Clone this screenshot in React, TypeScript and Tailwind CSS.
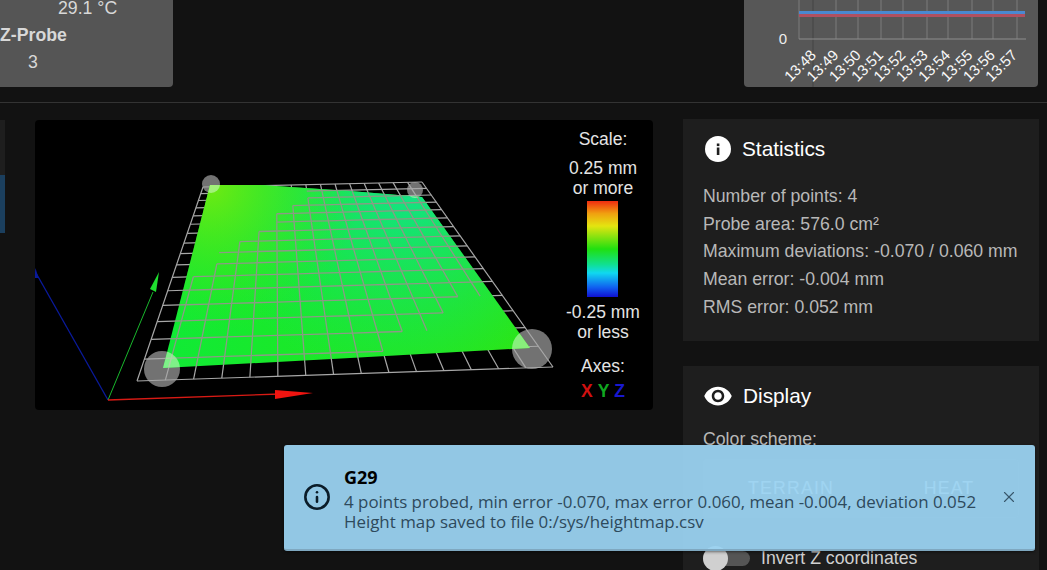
import React from "react";
import { Info, X } from "lucide-react";

type P = [number, number];

// Projects the unit square (u right, v up) onto the bed seen in the picture.
function homography(a: P, b: P, c: P, d: P) {
  const dx1 = b[0] - c[0], dx2 = d[0] - c[0], sx = a[0] - b[0] + c[0] - d[0];
  const dy1 = b[1] - c[1], dy2 = d[1] - c[1], sy = a[1] - b[1] + c[1] - d[1];
  const det = dx1 * dy2 - dx2 * dy1;
  const g = (sx * dy2 - dx2 * sy) / det;
  const h = (dx1 * sy - sx * dy1) / det;
  return (u: number, v: number): P => {
    const w = g * u + h * v + 1;
    return [
      ((b[0] - a[0] + g * b[0]) * u + (d[0] - a[0] + h * d[0]) * v + a[0]) / w,
      ((b[1] - a[1] + g * b[1]) * u + (d[1] - a[1] + h * d[1]) * v + a[1]) / w,
    ];
  };
}

// Canvas coordinates: page minus (35,120)
const off = (x: number, y: number): P => [x - 35, y - 120];
const gridAt = homography(off(137, 381), off(553, 367), off(422, 182), off(203, 187));

const COLS = 15;
const ROWS = 16;

const visibleOnSurface = (col: number, row: number) => row - 1.4 * col < 4.6 && row > 0.66 * (col - 7.3);

function BedMesh() {
  const under: React.ReactNode[] = [];
  const over: React.ReactNode[] = [];
  const vLines: string[] = [];
  const hLines: string[] = [];
  for (let i = 0; i <= COLS; i++) {
    let d = "";
    let open = false;
    for (let j = 0; j < ROWS; j++) {
      const a = gridAt(i / COLS, j / ROWS), b = gridAt(i / COLS, (j + 1) / ROWS);
      if (visibleOnSurface(i, j + 0.5)) {
        d += open ? `L${b[0]} ${b[1]}` : `M${a[0]} ${a[1]}L${b[0]} ${b[1]}`;
        open = true;
      } else open = false;
    }
    if (d) vLines.push(d);
    const s = gridAt(i / COLS, 0), e = gridAt(i / COLS, 1);
    under.push(<line key={`v${i}`} x1={s[0]} y1={s[1]} x2={e[0]} y2={e[1]} />);
  }
  for (let j = 0; j <= ROWS; j++) {
    let d = "";
    let open = false;
    for (let i = 0; i < COLS; i++) {
      const a = gridAt(i / COLS, j / ROWS), b = gridAt((i + 1) / COLS, j / ROWS);
      if (visibleOnSurface(i + 0.5, j)) {
        d += open ? `L${b[0]} ${b[1]}` : `M${a[0]} ${a[1]}L${b[0]} ${b[1]}`;
        open = true;
      } else open = false;
    }
    if (d) hLines.push(d);
    const s = gridAt(0, j / ROWS), e = gridAt(1, j / ROWS);
    under.push(<line key={`h${j}`} x1={s[0]} y1={s[1]} x2={e[0]} y2={e[1]} />);
  }
  [...vLines, ...hLines].forEach((d, i) => over.push(<path key={i} d={d} fill="none" />));
  const spheres: [P, number][] = [
    [off(211, 184), 9],
    [off(415, 190), 8],
    [off(162, 369), 18],
    [off(532, 349), 20],
  ];
  const outlinePts: P[] = [off(163, 368), off(350, 358), off(530, 348), off(422, 197), off(350, 191), off(260, 185), off(210, 185)];
  const outline = outlinePts.map((p) => p.join(",")).join(" ");
  return (
    <svg width={618} height={289} viewBox="0 0 618 289" className="block">
      <defs>
        <clipPath id="bed">
          <polygon points={outline} />
        </clipPath>
        <linearGradient id="base" x1="0" y1="0" x2="1" y2="0">
          <stop offset="0" stopColor="#10ea36" />
          <stop offset="1" stopColor="#2ce612" />
        </linearGradient>
        <radialGradient id="tl" gradientUnits="userSpaceOnUse" cx={175} cy={65} r={150}>
          <stop offset="0" stopColor="#70ea12" stopOpacity={1} />
          <stop offset="1" stopColor="#30e620" stopOpacity={0} />
        </radialGradient>
        <radialGradient id="tr" gradientUnits="userSpaceOnUse" cx={375} cy={62} r={205}>
          <stop offset="0" stopColor="#12e28c" stopOpacity={1} />
          <stop offset="1" stopColor="#12e270" stopOpacity={0} />
        </radialGradient>
      </defs>
      {spheres.map(([p, r], i) => (
        <circle key={i} cx={p[0]} cy={p[1]} r={r} fill="#727272" />
      ))}
      <g stroke="#a8a8a8" strokeWidth={1.2}>{under}</g>
      <polygon points={outline} fill="url(#base)" />
      <polygon points={outline} fill="url(#tr)" />
      <polygon points={outline} fill="url(#tl)" />
      <g clipPath="url(#bed)" stroke="#8c9a86" strokeWidth={1.3}>{over}</g>
      <g clipPath="url(#bed)">
        {spheres.map(([p, r], i) => (
          <circle key={i} cx={p[0]} cy={p[1]} r={r} fill="#c8f5c0" fillOpacity={0.6} />
        ))}
      </g>
      {/* axes */}
      <line x1={73} y1={280} x2={1} y2={153} stroke="#0a1a9c" strokeWidth={1.3} />
      <polygon points="0.5,148 3.5,158 -1,158" fill="#0a1a9c" />
      <line x1={73} y1={280} x2={118} y2={172} stroke="#18b82c" strokeWidth={1} />
      <polygon points="124,152 121,172 115,169" fill="#1fe02f" />
      <line x1={73} y1={280} x2={245} y2={274} stroke="#d81a14" strokeWidth={1.3} />
      <polygon points="278,273 240,270 240,279" fill="#f01410" />
    </svg>
  );
}

const times = ["13:48", "13:49", "13:50", "13:51", "13:52", "13:53", "13:54", "13:55", "13:56", "13:57"];

function MiniChart() {
  const xs = [55, 69, 92, 114, 137, 159, 183, 204, 228, 249, 273];
  return (
    <svg width={294} height={87} viewBox="0 0 294 87" className="block">
      {xs.map((x, i) => (
        <line key={x} x1={x} y1={0} x2={x} y2={i === 1 ? 87 : 39} stroke={i === 1 ? "#444444" : "#7c7c7c"} strokeWidth={1} />
      ))}
      <line x1={55} y1={39} x2={282} y2={39} stroke="#8e8e8e" strokeWidth={1} />
      <rect x={55} y={11} width={226} height={3} fill="#4a88d0" />
      <rect x={55} y={14} width={226} height={3} fill="#b05060" />
      <text x={43} y={44} textAnchor="end" fontSize={15} fill="#ededed" fontFamily="Liberation Sans, sans-serif">0</text>
      {times.map((t, i) => {
        const x = 73 + i * 22.35;
        return (
          <text
            key={t}
            transform={`translate(${x},56) rotate(-45)`}
            textAnchor="end"
            fontSize={15}
            fill="#f8f8f8"
            fontFamily="Liberation Sans, sans-serif"
          >
            {t}
          </text>
        );
      })}
    </svg>
  );
}

export default function App() {
  return (
    <div className="relative h-[570px] w-[1047px] overflow-hidden bg-[#121212] font-['Liberation_Sans',Arial,sans-serif] text-[17.7px] leading-none">
      {/* Top row */}
      <div className="flex h-[87px] items-stretch justify-between pr-[9px]">
        <div className="w-[173px] rounded-br-[4px] bg-[#555555] text-[#d8d8d8]">
          <div className="flex h-[17px] items-center pl-[58px]">29.1 °C</div>
          <div className="mt-[9px] font-bold leading-[18px]">Z-Probe</div>
          <div className="mt-[9px] pl-[28px] leading-[18px]">3</div>
        </div>
        <div className="w-[294px] overflow-hidden rounded-b-[4px] bg-[#575757]">
          <MiniChart />
        </div>
      </div>

      <div className="mt-[15px] h-px bg-[#333333]" />

      {/* Main */}
      <div className="flex pt-[16px]">
        <div className="mt-px flex h-[113px] w-[5px] flex-col bg-[#1e1e1e]">
          <div className="h-[55px]" />
          <div className="h-[58px] bg-[#1b3f5e]" />
        </div>
        <div className="relative ml-[30px] mt-px h-[290px] w-[618px] rounded-[4px] bg-black">
          <BedMesh />
          <div className="absolute right-[1px] top-0 flex w-[98px] flex-col items-center pt-[10px] text-[17.5px] text-[#e4e4e4]">
            <div className="h-[18px] leading-[18px]">Scale:</div>
            <div className="mt-[10px] h-[20px] leading-[20px]">0.25 mm</div>
            <div className="h-[20px] leading-[20px]">or more</div>
            <div className="-ml-[2px] mt-[3px] h-[96px] w-[31px] bg-[linear-gradient(to_bottom,#f02c10_0%,#f0a010_13%,#e4e410_26%,#20e010_50%,#10e090_66%,#10d8f0_75%,#1060f0_90%,#1010d0_100%)]" />
            <div className="mt-[5px] h-[20px] leading-[20px]">-0.25 mm</div>
            <div className="h-[20px] leading-[20px]">or less</div>
            <div className="mt-[15px] h-[18px] leading-[18px]">Axes:</div>
            <div className="mt-[7px] flex gap-[5px] font-bold leading-[18px]">
              <span className="text-[#d01010]">X</span>
              <span className="text-[#10a820]">Y</span>
              <span className="text-[#1818d0]">Z</span>
            </div>
          </div>
        </div>

        <div className="ml-[30px] w-[356px]">
          <div className="h-[222px] bg-[#1e1e1e] px-[20px] pt-[16px]">
            <div className="flex h-[28px] items-center gap-[10px] text-[20.8px] text-white">
              <svg width={28} height={28} viewBox="0 0 28 28" className="ml-[1px] shrink-0">
                <circle cx={14} cy={14} r={13} fill="#ffffff" />
                <rect x={12.8} y={12.5} width={2.6} height={7.5} fill="#1e1e1e" />
                <rect x={12.8} y={8.5} width={2.6} height={2.6} fill="#1e1e1e" />
              </svg>
              <span>Statistics</span>
            </div>
            <div className="mt-[20px] leading-[27.7px] text-[#b8b8b8]">
              <div>Number of points: 4</div>
              <div>Probe area: 576.0 cm²</div>
              <div>Maximum deviations: -0.070 / 0.060 mm</div>
              <div>Mean error: -0.004 mm</div>
              <div>RMS error: 0.052 mm</div>
            </div>
          </div>
          <div className="mt-[25px] h-[300px] bg-[#1e1e1e] px-[20px] pt-[16px]">
            <div className="flex h-[28px] items-center gap-[10px] text-[20.8px] text-white">
              <svg width={30} height={30} viewBox="0 0 24 24" className="shrink-0" fill="#ffffff">
                <path d="M12 4.5C7 4.5 2.73 7.61 1 12c1.73 4.39 6 7.5 11 7.5s9.27-3.11 11-7.5c-1.73-4.39-6-7.5-11-7.5zM12 17c-2.76 0-5-2.24-5-5s2.24-5 5-5 5 2.24 5 5-2.24 5-5 5zm0-8c-1.66 0-3 1.34-3 3s1.34 3 3 3 3-1.34 3-3-1.34-3-3-3z" />
              </svg>
              <span>Display</span>
            </div>
            <div className="mt-[20px] leading-[18px] text-[#b8b8b8]">Color scheme:</div>
            <div className="mt-[11px] flex h-[59px] w-[316px] tracking-[1.2px] text-white">
              <div className="flex w-[176px] items-center justify-center rounded-l-[4px] bg-[#333333]">TERRAIN</div>
              <div className="flex flex-1 items-center justify-center rounded-r-[4px] border border-[#2a2a2a]">HEAT</div>
            </div>
            <div className="mt-[32px] flex items-center gap-[11px]">
              <div className="relative h-[15px] w-[47px] rounded-full bg-[#555555]">
                <div className="absolute left-0 -top-[5px] h-[25px] w-[25px] rounded-full bg-[#d0d0d0]" />
              </div>
              <span className="text-[#d0d0d0]">Invert Z coordinates</span>
            </div>
          </div>
        </div>
      </div>

      {/* Notification */}
      <div className="absolute left-[284px] top-[445px] flex h-[106px] w-[751px] items-center rounded-[3px] border-b-2 border-[#7fa8c0] bg-[#9ad2f0]/95 font-['Open_Sans',sans-serif] shadow-[0_1px_3px_rgba(0,0,0,0.5)]">
        <Info size={28} strokeWidth={2.2} className="ml-[19px] shrink-0 text-[#0b1c28]" />
        <div className="ml-[13px] flex-1 pt-[4px] text-[16.9px] leading-[20px] text-[#2e4a5c]">
          <div className="mb-[5px] text-[18px] font-bold leading-[20px] text-black">G29</div>
          <div>4 points probed, min error -0.070, max error 0.060, mean -0.004, deviation 0.052</div>
          <div>Height map saved to file 0:/sys/heightmap.csv</div>
        </div>
        <X size={18} strokeWidth={1.5} className="mr-[17px] shrink-0 text-[#37566a]" />
      </div>
    </div>
  );
}
